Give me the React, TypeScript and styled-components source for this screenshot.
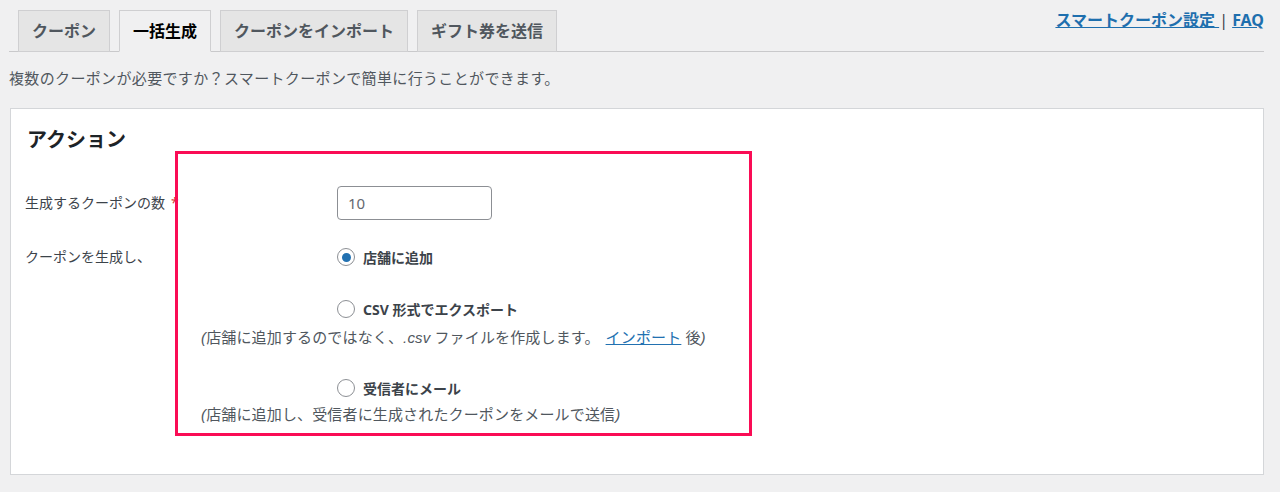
import React from "react";
import styled, { createGlobalStyle } from "styled-components";

const Global = createGlobalStyle`
  html, body { margin: 0; padding: 0; background: #f0f0f1; }
  body {
    font-family: "Noto Sans", "Noto Sans CJK JP", sans-serif;
    color: #3c434a;
    width: 1280px;
    height: 492px;
    overflow: hidden;
  }
  * { box-sizing: border-box; }
`;

const Page = styled.div`
  padding: 0 16px 0 9px;
`;

const TabBar = styled.nav`
  display: flex;
  align-items: flex-end;
  padding-top: 10px;
  border-bottom: 1px solid #c9c9cb;
`;

const Tab = styled.a<{ $active?: boolean }>`
  display: flex;
  align-items: center;
  height: 42px;
  margin: 0 0 -1px 9px;
  padding: 0 13px;
  border: 1px solid #cfcfd1;
  border-bottom-color: ${(p) => (p.$active ? "#f0f0f1" : "#cfcfd1")};
  background: ${(p) => (p.$active ? "#f0f0f1" : "#e5e5e5")};
  color: ${(p) => (p.$active ? "#000" : "#50575e")};
  font-size: 16px;
  font-weight: 700;
  line-height: 22px;
  text-decoration: none;
  white-space: nowrap;
`;

const TopLinks = styled.div`
  margin-left: auto;
  align-self: flex-start;
  font-size: 16px;
  font-weight: 700;
  line-height: 21px;
  color: #2271b1;
  white-space: nowrap;
`;

const TopLink = styled.a`
  color: #1e6fae;
  text-decoration: underline;
`;

const Sep = styled.span`
  color: #3c434a;
  font-weight: 400;
`;

const Intro = styled.p`
  margin: 15px 0 0 0;
  font-size: 15px;
  line-height: 22px;
  letter-spacing: 0.35px;
  color: #50575e;
`;

const Panel = styled.section`
  position: relative;
  margin: 19px 0 0 1px;
  background: #fff;
  border: 1px solid #d4d6d9;
  padding: 17px 0 48px 14px;
`;

const Heading = styled.h2`
  margin: 0 0 0 2px;
  font-size: 20px;
  font-weight: 700;
  line-height: 28px;
  color: #1d2327;
`;

const FormGrid = styled.div`
  display: grid;
  grid-template-columns: 176px 136px 1fr;
  align-items: center;
`;

const Label = styled.div<{ $top: number }>`
  grid-column: 1 / 3;
  margin-top: ${(p) => p.$top}px;
  font-size: 14px;
  line-height: 22px;
  color: #3c434a;
`;

const Required = styled.span`
  color: #d63638;
  margin-left: 6px;
`;

const Field = styled.div<{ $top: number }>`
  grid-column: 3;
  margin-top: ${(p) => p.$top}px;
`;

const NumberInput = styled.input`
  width: 155px;
  height: 34px;
  border: 1px solid #8c8f94;
  border-radius: 4px;
  padding: 0 10px;
  font-family: "Noto Sans", "Noto Sans CJK JP", sans-serif;
  font-size: 15px;
  color: #646970;
  background: #fff;
  outline: none;
`;

const RadioRow = styled.label`
  display: flex;
  align-items: center;
  gap: 8px;
  height: 22px;
  font-size: 14px;
  font-weight: 700;
  color: #3c434a;
`;

const RadioCircle = styled.span<{ $checked?: boolean }>`
  position: relative;
  width: 18px;
  height: 18px;
  border-radius: 50%;
  border: 1px solid #8c8f94;
  background: #fff;
  flex-shrink: 0;
  &::after {
    content: "";
    display: ${(p) => (p.$checked ? "block" : "none")};
    position: absolute;
    left: 3.5px;
    top: 3.5px;
    width: 9px;
    height: 9px;
    border-radius: 50%;
    background: #2271b1;
  }
`;

const Desc = styled.div<{ $top: number }>`
  grid-column: 2 / 4;
  margin-top: ${(p) => p.$top}px;
  font-size: 15px;
  line-height: 22px;
  letter-spacing: 0.15px;
  color: #50575e;
  white-space: nowrap;
`;

const Ital = styled.em`
  font-family: "Liberation Sans", sans-serif;
  font-style: italic;
`;

const DescLink = styled.a`
  color: #2271b1;
  text-decoration: underline;
  margin-left: 6px;
`;

const Highlight = styled.div`
  position: absolute;
  left: 164px;
  top: 42px;
  width: 577px;
  height: 285px;
  border: 3px solid #fa0c55;
  pointer-events: none;
`;

export default function App() {
  return (
    <>
      <Global />
      <Page>
        <TabBar>
          <Tab>クーポン</Tab>
          <Tab $active>一括生成</Tab>
          <Tab>クーポンをインポート</Tab>
          <Tab>ギフト券を送信</Tab>
          <TopLinks>
            <TopLink>スマートクーポン設定 </TopLink>
            <Sep>|</Sep> <TopLink>FAQ</TopLink>
          </TopLinks>
        </TabBar>
        <Intro>複数のクーポンが必要ですか？スマートクーポンで簡単に行うことができます。</Intro>
        <Panel>
          <Heading>アクション</Heading>
          <FormGrid>
            <Label $top={32}>
              生成するクーポンの数<Required>*</Required>
            </Label>
            <Field $top={32}>
              <NumberInput defaultValue="10" />
            </Field>
            <Label $top={26}>クーポンを生成し、</Label>
            <Field $top={26}>
              <RadioRow>
                <RadioCircle $checked />
                店舗に追加
              </RadioRow>
            </Field>
            <Field $top={30}>
              <RadioRow>
                <RadioCircle />
                CSV 形式でエクスポート
              </RadioRow>
            </Field>
            <Desc $top={6}>
              <Ital>(</Ital>店舗に追加するのではなく、<Ital>.csv</Ital> ファイルを作成します。
              <DescLink>インポート</DescLink> 後<Ital>)</Ital>
            </Desc>
            <Field $top={28}>
              <RadioRow>
                <RadioCircle />
                受信者にメール
              </RadioRow>
            </Field>
            <Desc $top={4}>
              <Ital>(</Ital>店舗に追加し、受信者に生成されたクーポンをメールで送信<Ital>)</Ital>
            </Desc>
          </FormGrid>
          <Highlight />
        </Panel>
      </Page>
    </>
  );
}
